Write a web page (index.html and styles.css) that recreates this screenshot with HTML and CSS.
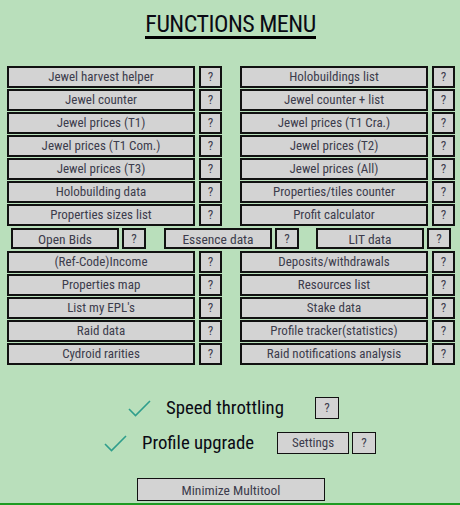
FILE: index.html
```html
<!DOCTYPE html>
<html>
<head>
<meta charset="utf-8">
<link rel="stylesheet" href="styles.css">
</head>
<body>
<div class="page">
  <div class="title-wrap"><h1 class="title">FUNCTIONS MENU</h1></div>
  <div class="grid">
    <div class="row">
      <div class="pair"><button class="btn">Jewel harvest helper</button><button class="q">?</button></div>
      <div class="pair"><button class="btn">Holobuildings list</button><button class="q">?</button></div>
    </div>
    <div class="row">
      <div class="pair"><button class="btn">Jewel counter</button><button class="q">?</button></div>
      <div class="pair"><button class="btn">Jewel counter + list</button><button class="q">?</button></div>
    </div>
    <div class="row">
      <div class="pair"><button class="btn">Jewel prices (T1)</button><button class="q">?</button></div>
      <div class="pair"><button class="btn">Jewel prices (T1 Cra.)</button><button class="q">?</button></div>
    </div>
    <div class="row">
      <div class="pair"><button class="btn">Jewel prices (T1 Com.)</button><button class="q">?</button></div>
      <div class="pair"><button class="btn">Jewel prices (T2)</button><button class="q">?</button></div>
    </div>
    <div class="row">
      <div class="pair"><button class="btn">Jewel prices (T3)</button><button class="q">?</button></div>
      <div class="pair"><button class="btn">Jewel prices (All)</button><button class="q">?</button></div>
    </div>
    <div class="row">
      <div class="pair"><button class="btn">Holobuilding data</button><button class="q">?</button></div>
      <div class="pair"><button class="btn">Properties/tiles counter</button><button class="q">?</button></div>
    </div>
    <div class="row">
      <div class="pair"><button class="btn">Properties sizes list</button><button class="q">?</button></div>
      <div class="pair"><button class="btn">Profit calculator</button><button class="q">?</button></div>
    </div>
    <div class="row row3">
      <div class="pair pair3"><button class="btn btn3">Open Bids</button><button class="q">?</button></div>
      <div class="pair pair3"><button class="btn btn3">Essence data</button><button class="q">?</button></div>
      <div class="pair pair3"><button class="btn btn3">LIT data</button><button class="q">?</button></div>
    </div>
    <div class="row">
      <div class="pair"><button class="btn">(Ref-Code)Income</button><button class="q">?</button></div>
      <div class="pair"><button class="btn">Deposits/withdrawals</button><button class="q">?</button></div>
    </div>
    <div class="row">
      <div class="pair"><button class="btn">Properties map</button><button class="q">?</button></div>
      <div class="pair"><button class="btn">Resources list</button><button class="q">?</button></div>
    </div>
    <div class="row">
      <div class="pair"><button class="btn">List my EPL's</button><button class="q">?</button></div>
      <div class="pair"><button class="btn">Stake data</button><button class="q">?</button></div>
    </div>
    <div class="row">
      <div class="pair"><button class="btn">Raid data</button><button class="q">?</button></div>
      <div class="pair"><button class="btn">Profile tracker(statistics)</button><button class="q">?</button></div>
    </div>
    <div class="row">
      <div class="pair"><button class="btn">Cydroid rarities</button><button class="q">?</button></div>
      <div class="pair"><button class="btn">Raid notifications analysis</button><button class="q">?</button></div>
    </div>
  </div>

  <div class="options">
    <div class="opt opt-speed">
      <svg class="check" width="23" height="17" viewBox="0 0 23 17"><polyline points="1,9 7.5,15.5 22,1" fill="none" stroke="#2f9e8c" stroke-width="1.6"/></svg>
      <span class="label">Speed throttling</span>
      <button class="small q-small q-speed">?</button>
    </div>
    <div class="opt opt-profile">
      <svg class="check" width="23" height="17" viewBox="0 0 23 17"><polyline points="1,9 7.5,15.5 22,1" fill="none" stroke="#2f9e8c" stroke-width="1.6"/></svg>
      <span class="label">Profile upgrade</span>
      <button class="small settings">Settings</button>
      <button class="small q-small">?</button>
    </div>
  </div>

  <div class="bottom">
    <button class="small minimize">Minimize Multitool</button>
  </div>
  <div class="green-line"></div>
</div>
</body>
</html>
```

FILE: styles.css
```css
html, body {
  margin: 0;
  padding: 0;
  background: #b9dfbb;
}
body {
  font-family: "Roboto Condensed", "Liberation Sans Narrow", "DejaVu Sans Condensed", sans-serif;
  width: 460px;
  height: 505px;
  overflow: hidden;
}
.page {
  display: flex;
  flex-direction: column;
  height: 505px;
}
.title-wrap {
  display: flex;
  justify-content: center;
  padding-top: 12px;
  padding-left: 1px;
  height: 55px;
  box-sizing: border-box;
}
.title {
  margin: 0;
  font-size: 24px;
  font-weight: 400;
  line-height: 24px;
  color: #0a0a14;
  height: 24px;
  border-bottom: 3px solid #000;
  padding: 0;
  letter-spacing: -0.5px;
}
.grid {
  display: flex;
  flex-direction: column;
  gap: 1px;
  padding-left: 7px;
  margin-top: 11px;
}
.row {
  display: flex;
  gap: 18px;
  height: 22px;
}
.row3 {
  margin: 1px 0;
  height: 21px;
  padding-left: 4px;
  gap: 18px;
}
.row3 .pair3:nth-child(3) { margin-left: -1px; }
.pair {
  display: flex;
  gap: 4px;
}
.pair3 { gap: 3px; }
button {
  font-family: inherit;
  margin: 0;
  padding: 0;
  background: #d3d3d3;
  color: #3c3c4c;
  box-sizing: border-box;
  cursor: pointer;
}
.btn {
  width: 188px;
  height: 22px;
  border: 2px solid #111;
  font-size: 13px;
  line-height: 18px;
}
.btn3 {
  width: 108px;
  height: 21px;
  font-size: 13.5px;
}
.q {
  width: 23px;
  height: 22px;
  border: 2px solid #111;
  font-size: 13px;
  line-height: 18px;
}
.row3 .q {
  width: 24px;
  height: 21px;
}
.options {
  display: flex;
  flex-direction: column;
  margin-top: 32px;
  gap: 13px;
}
.opt {
  display: flex;
  align-items: center;
  height: 22px;
}
.opt-speed { padding-left: 128px; }
.opt-profile { padding-left: 104px; }
.check { display: block; flex: none; }
.label {
  font-size: 18.8px;
  color: #0a0a14;
  line-height: 22px;
}
.opt-speed .label { margin-left: 15px; }
.opt-profile .label { margin-left: 15px; }
.small {
  border: 1.5px solid #111;
  height: 22px;
  font-size: 13px;
  line-height: 18px;
}
.q-small { width: 24px; }
.q-speed { margin-left: 31px; }
.settings { width: 72px; margin-left: 23px; margin-right: 3px; }
.bottom {
  display: flex;
  padding-left: 137px;
  margin-top: 24px;
}
.minimize {
  width: 188px;
  height: 23px;
  font-size: 13.5px;
}
.green-line {
  margin-top: 2px;
  border-top: 2px solid #1e9a22;
}
```
